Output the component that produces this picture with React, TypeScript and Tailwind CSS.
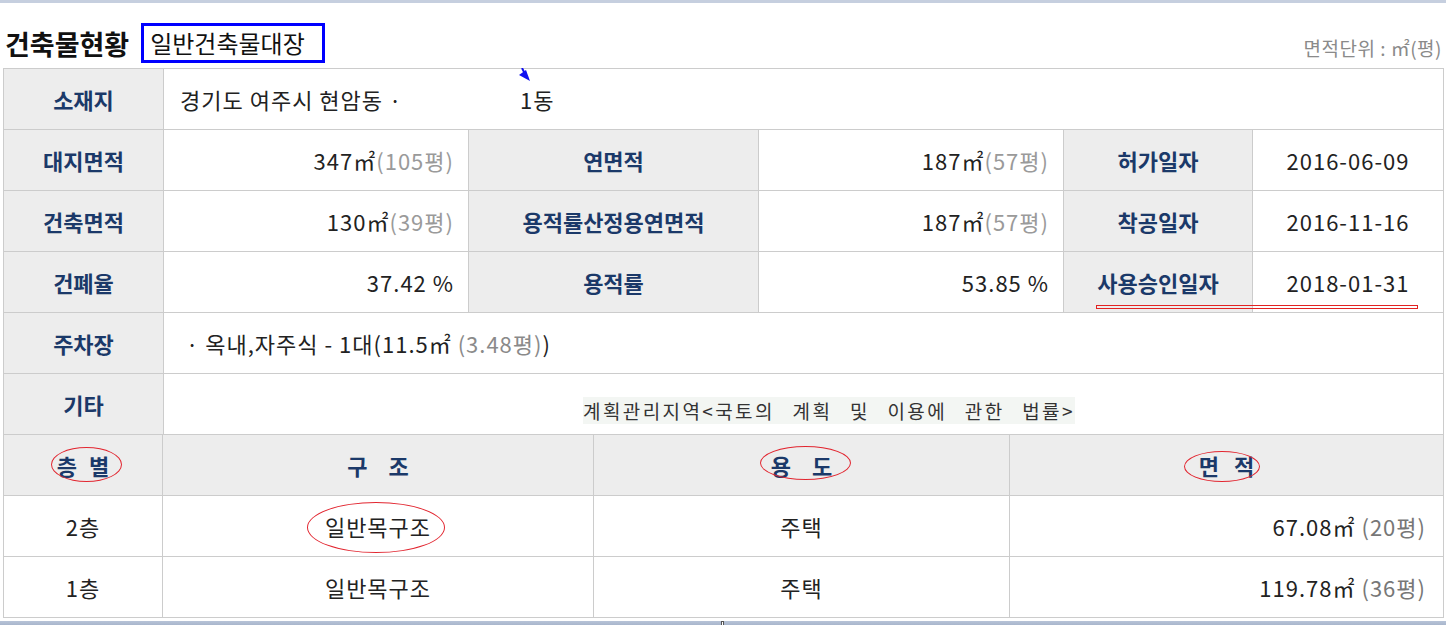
import React from "react";

function Th({ children, className = "" }: { children: React.ReactNode; className?: string }) {
  return (
    <div className={"bg-[#ededed] flex items-center justify-center font-bold text-[22px] text-[#1b3969] " + className}>
      {children}
    </div>
  );
}

function Num({ v, p }: { v: string; p: string }) {
  return (
    <div className="bg-white flex items-center justify-end pr-[14px] text-[22px] tracking-[1px] text-[#222]">
      <span>{v}</span>
      <span className="text-[#9a9a9a]">{p}</span>
    </div>
  );
}

function Plain({ children, className = "" }: { children: React.ReactNode; className?: string }) {
  return (
    <div className={"bg-white flex items-center text-[22px] tracking-[1px] text-[#222] " + className}>{children}</div>
  );
}

export default function App() {
  return (
    <div className="relative w-[1446px] h-[625px] overflow-hidden bg-white font-['Noto_Sans_CJK_KR','Noto_Sans',sans-serif]">
      <div className="h-[3px] bg-[#c6cfdf]" />
      <div className="h-[65px] flex items-end justify-between pl-[5px] pr-[4px] pb-[5px]">
        <div className="flex items-center gap-[12px]">
          <h2 className="text-[27px] font-bold text-[#111] leading-none">건축물현황</h2>
          <div className="border-[3px] border-[#0000ff] w-[184px] h-[40px] flex items-center pl-[6px] text-[24px] text-[#111]">
            일반건축물대장
          </div>
        </div>
        <span className="text-[19px] tracking-[0.5px] text-[#8a8a8a] mb-[1px]">면적단위 : ㎡(평)</span>
      </div>

      <div className="ml-[3px] w-[1441px] grid grid-cols-[159px_304px_289px_304px_188px_190px] auto-rows-[60px] gap-px bg-[#cccccc] border border-[#cccccc]">
        <Th>소재지</Th>
        <Plain className="col-span-5 pl-[16px]">
          <span className="inline-block w-[340px]">경기도 여주시 현암동 ·</span>
          <span>1동</span>
        </Plain>

        <Th>대지면적</Th>
        <Num v="347㎡" p="(105평)" />
        <Th>연면적</Th>
        <Num v="187㎡" p="(57평)" />
        <Th>허가일자</Th>
        <Plain className="justify-center">2016-06-09</Plain>

        <Th>건축면적</Th>
        <Num v="130㎡" p="(39평)" />
        <Th>용적률산정용연면적</Th>
        <Num v="187㎡" p="(57평)" />
        <Th>착공일자</Th>
        <Plain className="justify-center">2016-11-16</Plain>

        <Th>건폐율</Th>
        <Plain className="justify-end pr-[14px]">37.42 %</Plain>
        <Th>용적률</Th>
        <Plain className="justify-end pr-[14px]">53.85 %</Plain>
        <Th>사용승인일자</Th>
        <Plain className="justify-center">2018-01-31</Plain>

        <Th>주차장</Th>
        <Plain className="col-span-5 pl-[22px] whitespace-pre">
          <span>· 옥내,자주식 - 1대(11.5㎡ </span>
          <span className="text-[#8a8a8a]">(3.48평)</span>
          <span>)</span>
        </Plain>

        <Th>기타</Th>
        <div className="col-span-5 bg-white flex items-start pt-[23px] pl-[419px]">
          <span className="bg-[#f3f6f3] text-[19px] leading-[27px] text-[#333] tracking-[2.4px] [word-spacing:11px] whitespace-pre">
            계획관리지역&lt;국토의 계획 및 이용에 관한 법률&gt;
          </span>
        </div>
      </div>

      <div className="ml-[3px] w-[1441px] grid grid-cols-[158px_430px_415px_433px] auto-rows-[60px] gap-px bg-[#cccccc] border border-t-0 border-[#cccccc]">
        <Th className="gap-[12px]">
          <span>층</span>
          <span>별</span>
        </Th>
        <Th className="gap-[21px]">
          <span>구</span>
          <span>조</span>
        </Th>
        <Th className="gap-[21px]">
          <span>용</span>
          <span>도</span>
        </Th>
        <Th className="gap-[15px]">
          <span>면</span>
          <span>적</span>
        </Th>

        <Plain className="justify-center">2층</Plain>
        <Plain className="justify-center">일반목구조</Plain>
        <Plain className="justify-center">주택</Plain>
        <Plain className="justify-end pr-[17px] whitespace-pre">
          <span>67.08㎡ </span>
          <span className="text-[#777]">(20평)</span>
        </Plain>

        <Plain className="justify-center">1층</Plain>
        <Plain className="justify-center">일반목구조</Plain>
        <Plain className="justify-center">주택</Plain>
        <Plain className="justify-end pr-[17px] whitespace-pre">
          <span>119.78㎡ </span>
          <span className="text-[#777]">(36평)</span>
        </Plain>
      </div>

      <div className="h-[3px]" />
      <div className="relative h-[5px] bg-gradient-to-b from-[#b7c3d7] to-[#a5b3ca]">
        <div className="absolute left-[721px] top-0 w-[3px] h-[5px] bg-white border border-[#555]" />
      </div>

      {/* overlays */}
      <svg className="absolute left-[519px] top-[68px]" width="13" height="14" viewBox="0 0 13 14">
        <polygon points="0,7 7,2 11,13" fill="#1010f0" />
        <line x1="3" y1="0" x2="6" y2="6" stroke="#1010f0" strokeWidth="2" />
      </svg>
      <div className="absolute left-[1096px] top-[305px] w-[322px] h-[4px] border border-[#e22222]" />
      <div className="absolute left-[51px] top-[447px] w-[71px] h-[35px] rounded-[50%] border border-[#e22630]" />
      <div className="absolute left-[307px] top-[502px] w-[138px] h-[51px] rounded-[50%] border border-[#e22630]" />
      <div className="absolute left-[760px] top-[446px] w-[91px] h-[34px] rounded-[50%] border border-[#e22630]" />
      <div className="absolute left-[1184px] top-[451px] w-[76px] h-[31px] rounded-[50%] border border-[#e22630]" />
    </div>
  );
}
